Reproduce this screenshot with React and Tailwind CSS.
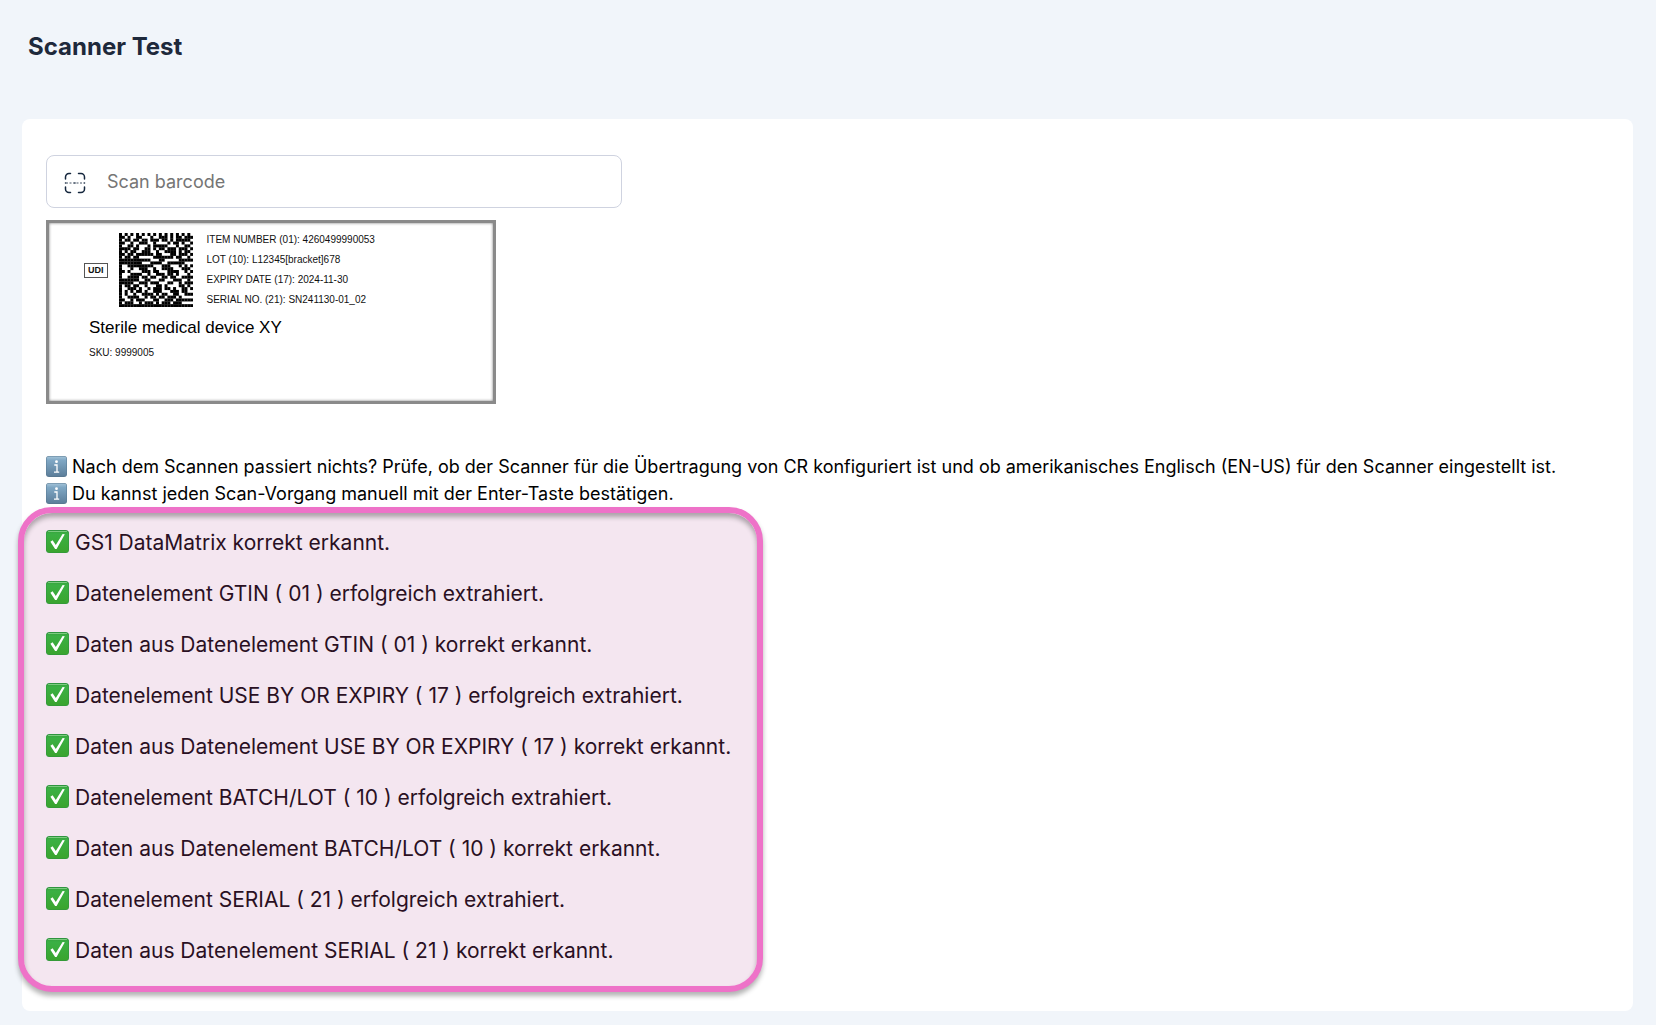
const MATRIX = [
  '10101010101010101010101010',
  '11010011000100111010110111',
  '10110110110111011010111110',
  '11001001110010000101101001',
  '10011010001011111000100110',
  '11110110011010110111011101',
  '10101100111001001111010110',
  '11011011111101100011011101',
  '10110110000011111110110010',
  '11111111111000110000011111',
  '11111111000111100111111000',
  '10011111111100011100010101',
  '10001001110010011110001110',
  '11010000111011000111100101',
  '10001111001001110110100010',
  '10011110110110011011001111',
  '11111110011000110001110010',
  '11111001110111000110010111',
  '10110110010001101000011010',
  '10011101001011101101001101',
  '10101011010011100011101100',
  '10100100111101011001100111',
  '10011110010110110111010000',
  '11001011100011001110111111',
  '10111001011101011101110000',
  '11111111111111111111111111',
];

const LABEL_LINES = [
  'ITEM NUMBER (01): 4260499990053',
  'LOT (10): L12345[bracket]678',
  'EXPIRY DATE (17): 2024-11-30',
  'SERIAL NO. (21): SN241130-01_02',
];

const HINTS = [
  'Nach dem Scannen passiert nichts? Prüfe, ob der Scanner für die Übertragung von CR konfiguriert ist und ob amerikanisches Englisch (EN-US) für den Scanner eingestellt ist.',
  'Du kannst jeden Scan-Vorgang manuell mit der Enter-Taste bestätigen.',
];

const RESULTS = [
  'GS1 DataMatrix korrekt erkannt.',
  'Datenelement GTIN ( 01 ) erfolgreich extrahiert.',
  'Daten aus Datenelement GTIN ( 01 ) korrekt erkannt.',
  'Datenelement USE BY OR EXPIRY ( 17 ) erfolgreich extrahiert.',
  'Daten aus Datenelement USE BY OR EXPIRY ( 17 ) korrekt erkannt.',
  'Datenelement BATCH/LOT ( 10 ) erfolgreich extrahiert.',
  'Daten aus Datenelement BATCH/LOT ( 10 ) korrekt erkannt.',
  'Datenelement SERIAL ( 21 ) erfolgreich extrahiert.',
  'Daten aus Datenelement SERIAL ( 21 ) korrekt erkannt.',
];

function ScanIcon() {
  return (
    <svg viewBox="0 0 22 22" className="mt-[2px] h-[22px] w-[22px] shrink-0" fill="none" stroke="#14263d" strokeLinecap="round" aria-hidden="true">
      <path strokeWidth="1.5" d="M1.500 7V5a3.500 3.500 0 0 1 3.500-3.500H6.500M14.500 1.500H17a3.500 3.500 0 0 1 3.500 3.500V7M20.500 15v2a3.500 3.500 0 0 1-3.500 3.500H14.500M6.500 20.500H5a3.500 3.500 0 0 1-3.500-3.500V15" />
      <path strokeWidth="0.800" strokeLinecap="butt" strokeDasharray="2 1.500" d="M2 11h18" />
      <path strokeWidth="1.500" d="M1.500 11h.01M11 11h.01M20.500 11h.01" />
    </svg>
  );
}

function InfoIcon() {
  return (
    <svg viewBox="0 0 21 21" className="h-[21px] w-[21px] shrink-0" aria-hidden="true">
      <defs>
        <linearGradient id="info-fill" x1="0" y1="0" x2="0" y2="1">
          <stop offset="0" stopColor="#a3c3d8" />
          <stop offset="0.200" stopColor="#7fa7c4" />
          <stop offset="1" stopColor="#5d7f9b" />
        </linearGradient>
      </defs>
      <rect width="21" height="21" rx="3" fill="#587891" />
      <rect x="0.500" y="0.500" width="20" height="19.500" rx="2.500" fill="url(#info-fill)" />
      <circle cx="10.500" cy="5.700" r="1.400" fill="#fff" />
      <path d="M8.300 9h2.700v7M8 16.200h5.200" fill="none" stroke="#fff" strokeWidth="1.300" />
    </svg>
  );
}

function CheckIcon() {
  return (
    <svg viewBox="0 0 23 23" className="mt-[2px] h-[23px] w-[23px] shrink-0" aria-hidden="true">
      <defs>
        <linearGradient id="check-fill" x1="0" y1="0" x2="0" y2="1">
          <stop offset="0" stopColor="#35a03c" />
          <stop offset="0.150" stopColor="#3bb044" />
          <stop offset="1" stopColor="#3aa42e" />
        </linearGradient>
      </defs>
      <rect width="23" height="23" rx="3.500" fill="#2d9140" />
      <rect x="0.500" y="0.800" width="22" height="21.700" rx="3" fill="url(#check-fill)" />
      <path d="M2.500 1.500h18" stroke="#7ccb80" strokeWidth="1" strokeLinecap="round" />
      <path d="M4.400 11.800l2.200-1.500 3.200 4.800L16.600 3.900l2.200.3L10.600 18.900H9.100z" fill="#fff" />
    </svg>
  );
}

function DataMatrix() {
  return (
    <svg viewBox="0 0 26 26" className="h-[74px] w-[74px] shrink-0" role="img" aria-label="GS1 DataMatrix">
      {MATRIX.map((row, y) =>
        [...row].map((cell, x) =>
          cell === '1' ? <rect key={`${x}-${y}`} x={x} y={y} width="1.050" height="1.050" fill="#000" /> : null
        )
      )}
    </svg>
  );
}

function DeviceLabel() {
  return (
    <figure className="mt-3 h-[184px] w-full max-w-[450px] border-3 border-[#8a8a8a] bg-white pt-[7px] pl-[35px] font-['Liberation_Sans',sans-serif] text-[#111] shadow-[inset_0_0_3px_#777]">
      <div className="flex items-center">
        <span className="border border-[#555] px-[3px] text-[9px] leading-[13px] font-bold">UDI</span>
        <div className="ml-[11px]">
          <DataMatrix />
        </div>
        <ul className="ml-[14px] text-[10px] leading-5">
          {LABEL_LINES.map((line) => (
            <li key={line}>{line}</li>
          ))}
        </ul>
      </div>
      <figcaption className="pl-[5px]">
        <p className="mt-[6px] text-[17px] leading-6 text-black">Sterile medical device XY</p>
        <p className="mt-[3px] text-[10px] leading-5">SKU: 9999005</p>
      </figcaption>
    </figure>
  );
}

export default function App() {
  return (
    <div className="min-h-screen bg-[#f1f5fa] pr-[23px] pb-[15px] pl-[22px] font-['Inter',sans-serif]">
      <header className="px-[6px] pt-[30px] pb-14">
        <h1 className="text-2xl leading-[33px] font-bold text-[#1e293b]">Scanner Test</h1>
      </header>

      <main className="rounded-lg bg-white px-6 pt-9 pb-[19px]">
        <label className="flex h-[53px] max-w-xl items-center gap-[21px] rounded-lg border border-[#cfd3e0] px-[17px]">
          <ScanIcon />
          <input
            type="text"
            aria-label="Scan barcode"
            placeholder="Scan barcode"
            className="w-full bg-transparent text-lg outline-none placeholder:text-[#757575]"
          />
        </label>

        <DeviceLabel />

        <div className="mt-[49px] text-lg leading-[27px] text-black">
          {HINTS.map((hint) => (
            <p key={hint} className="flex items-center gap-[5px]">
              <InfoIcon />
              {hint}
            </p>
          ))}
        </div>

        <ul className="relative -ml-[28px] flex w-[745px] max-w-full flex-col gap-[21px] rounded-[34px] border-6 border-[#ee72c8] bg-[#f4e6f0] pt-[15px] pb-5 pl-[22px] text-[21px] leading-[30px] text-[#2a1023] shadow-[0_4px_5px_rgba(0,0,0,0.3),inset_0_4px_5px_rgba(0,0,0,0.3)]">
          {RESULTS.map((result) => (
            <li key={result} className="flex items-start gap-[6px]">
              <CheckIcon />
              {result}
            </li>
          ))}
        </ul>
      </main>
    </div>
  );
}
